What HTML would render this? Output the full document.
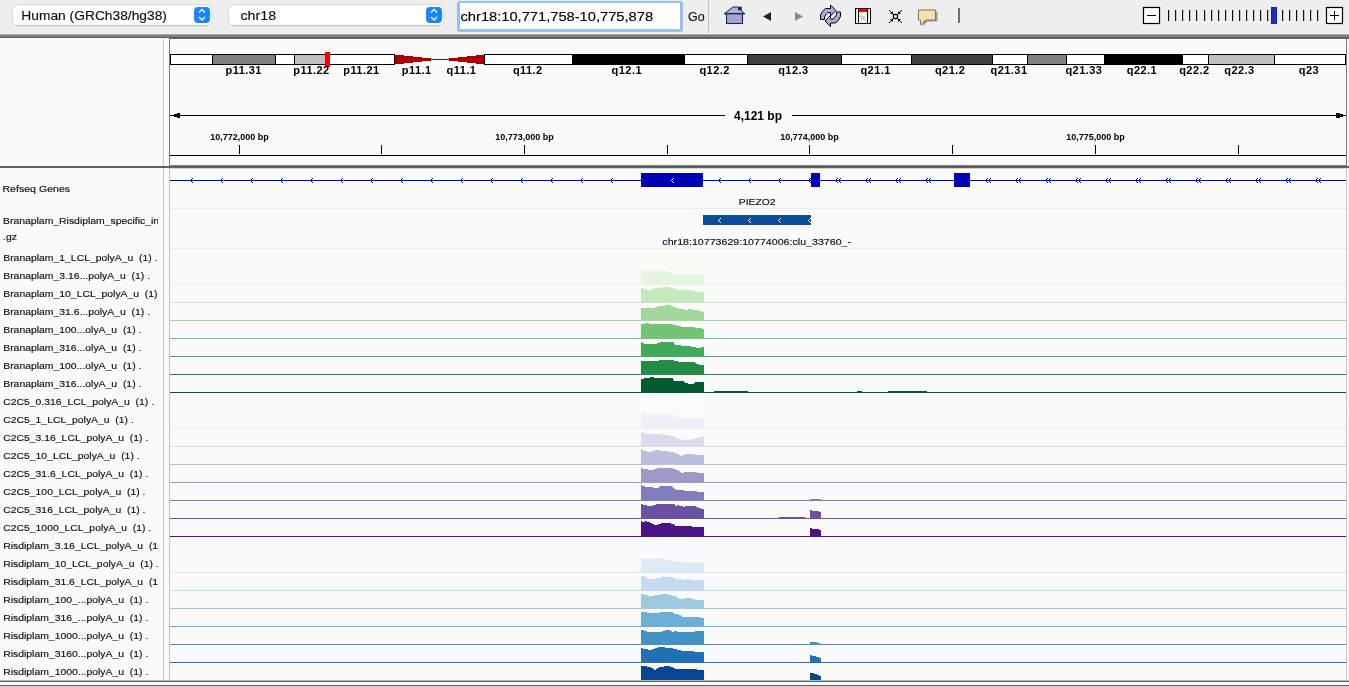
<!DOCTYPE html>
<html><head><meta charset="utf-8"><title>IGV</title>
<style>html,body{margin:0;padding:0;width:1349px;height:687px;overflow:hidden;background:#eeeeee;}
svg{display:block;font-family:"Liberation Sans",sans-serif;} text{white-space:pre;} body{-webkit-font-smoothing:antialiased;} svg{will-change:transform;}</style></head>
<body><svg width="1349" height="687" viewBox="0 0 1349 687" font-family="Liberation Sans, sans-serif" xml:space="preserve">
<defs><clipPath id="nameclip"><rect x="0" y="160" width="158" height="530"/></clipPath></defs>
<rect x="0" y="0" width="1349" height="35" fill="#eeeeee" />
<rect x="12.5" y="4.8" width="199.5" height="20.6" rx="5" fill="#ffffff" stroke="#d6d6d6" stroke-width="1"/>
<line x1="16" y1="25.8" x2="208" y2="25.8" stroke="#b8b8b8" stroke-width="0.8"/>
<rect x="194" y="7" width="16" height="16" rx="4" fill="#1a86ff"/>
<polyline points="199,12.5 202,9.5 205,12.5" fill="none" stroke="#fff" stroke-width="1.3"/>
<polyline points="199,17 202,20 205,17" fill="none" stroke="#fff" stroke-width="1.3"/>
<text transform="translate(21.3,20) scale(1.03,1)" font-size="13.4" font-weight="400" fill="#111" text-anchor="start" stroke="#111" stroke-width="0.15" >Human (GRCh38/hg38)</text>
<rect x="228.5" y="4.8" width="215.5" height="20.6" rx="5" fill="#ffffff" stroke="#d6d6d6" stroke-width="1"/>
<line x1="232" y1="25.8" x2="440" y2="25.8" stroke="#b8b8b8" stroke-width="0.8"/>
<rect x="426" y="7" width="16" height="16" rx="4" fill="#1a86ff"/>
<polyline points="431,12.5 434,9.5 437,12.5" fill="none" stroke="#fff" stroke-width="1.3"/>
<polyline points="431,17 434,20 437,17" fill="none" stroke="#fff" stroke-width="1.3"/>
<text transform="translate(240.4,20) scale(1.067,1)" font-size="13.4" font-weight="400" fill="#111" text-anchor="start" stroke="#111" stroke-width="0.15" >chr18</text>
<rect x="457" y="1" width="226" height="31" rx="3" fill="#94c0f2"/>
<rect x="460" y="3" width="220" height="26" fill="#ffffff" />
<text transform="translate(460.5,21) scale(1.096,1)" font-size="13.4" font-weight="400" fill="#000" text-anchor="start" stroke="#000" stroke-width="0.15" >chr18:10,771,758-10,775,878</text>
<text transform="translate(688,21) scale(0.93,1)" font-size="13.4" font-weight="400" fill="#111" text-anchor="start" stroke="#111" stroke-width="0.15" >Go</text>
<rect x="708" y="0" width="1" height="35" fill="#c4c4c4" />
<g>
<polygon points="724.5,13.5 733,7 737.5,7 744.5,13.5" fill="#b2b2d8" stroke="#22225a" stroke-width="1"/>
<rect x="738" y="6.7" width="3.8" height="3.5" fill="#22225a"/>
<rect x="726.5" y="13.5" width="16" height="10" fill="#a4a4cc" stroke="#22225a" stroke-width="1.1"/>
<rect x="724" y="13" width="21" height="1.3" fill="#22225a"/>
</g>
<polygon points="763,16.5 771,12 771,21" fill="#222"/>
<polygon points="803,16.5 795,12 795,21" fill="#8a8a8a"/>
<g stroke="#000" stroke-width="1" fill="#a9a9d9" stroke-linejoin="miter">
<polygon points="820.5,19.5 820.5,15 822.5,11.5 825.5,8.5 830.5,8.5 830.5,5 836,10.5 830.5,16 830.5,12.5 828,12.5 826,14.5 824.5,17 824.5,19.5"/>
<polygon points="840.5,12 840.5,16.5 838.5,20 835.5,23 830.5,23 830.5,26.5 825,21 830.5,15.5 830.5,19 833,19 835,17 836.5,14.5 836.5,12"/>
</g>
<g shape-rendering="crispEdges">
<rect x="855.5" y="8.5" width="15" height="15" fill="#fff" stroke="#000" stroke-width="1.2"/>
<rect x="858" y="9" width="1" height="14" fill="#000"/>
<rect x="867" y="9" width="1" height="14" fill="#000"/>
<rect x="859" y="9" width="8" height="3" fill="#ff0000"/>
<rect x="860" y="12" width="3" height="2" fill="#c8d4f8"/>
<rect x="865" y="13" width="1" height="1" fill="#f4c0b8"/>
<rect x="859" y="15" width="2" height="2" fill="#f4bcb4"/>
<rect x="861" y="14" width="1" height="2" fill="#f0c4c0"/>
<rect x="861" y="16" width="4" height="4" fill="#c4ccf4"/>
<rect x="865" y="19" width="1" height="2" fill="#f4c4bc"/>
<rect x="860" y="20" width="2" height="2" fill="#dfe4fa"/>
<rect x="856" y="12" width="1" height="2" fill="#f0c0c0"/>
<rect x="856" y="9" width="1" height="3" fill="#d0d8f8"/>
<rect x="856" y="15" width="1" height="6" fill="#d8def8"/>
<rect x="868" y="10" width="1" height="3" fill="#f0c8c8"/>
<rect x="868" y="14" width="1" height="7" fill="#d8dcf6"/>
</g>
<g stroke="#000" stroke-width="1" fill="none">
<rect x="893.5" y="14.5" width="4" height="4" stroke-width="1.3"/>
<line x1="889" y1="10" x2="892.5" y2="13.5"/><line x1="902" y1="10" x2="898.5" y2="13.5"/>
<line x1="889" y1="23" x2="892.5" y2="19.5"/><line x1="902" y1="23" x2="898.5" y2="19.5"/>
<polyline points="890.5,13.5 892.5,13.5 892.5,11.5"/><polyline points="900.5,13.5 898.5,13.5 898.5,11.5"/>
<polyline points="890.5,19.5 892.5,19.5 892.5,21.5"/><polyline points="900.5,19.5 898.5,19.5 898.5,21.5"/>
</g>
<path d="M919.5,10.5 L936.5,10.5 L936.5,20.5 L926.5,20.5 L921.5,25.5 L921.5,20.5 L919.5,20.5 Z" fill="#9a9a9a" transform="translate(1,1)"/>
<path d="M918.5,10 L935.5,10 L935.5,20 L925.5,20 L920.5,25 L920.5,20 L918.5,20 Z" fill="#ede6a8" stroke="#777" stroke-width="1"/>
<rect x="958" y="8" width="2" height="15" fill="#6e6e6e" />
<rect x="1143.5" y="7.5" width="16" height="16" fill="#fff" stroke="#000" stroke-width="1.2"/>
<rect x="1147" y="15" width="9" height="1" fill="#000" />
<rect x="1168" y="10" width="1.2" height="11" fill="#111" />
<rect x="1175" y="10" width="1.2" height="11" fill="#111" />
<rect x="1182" y="10" width="1.2" height="11" fill="#111" />
<rect x="1189" y="10" width="1.2" height="11" fill="#111" />
<rect x="1196" y="10" width="1.2" height="11" fill="#111" />
<rect x="1204" y="10" width="1.2" height="11" fill="#111" />
<rect x="1211" y="10" width="1.2" height="11" fill="#111" />
<rect x="1218" y="10" width="1.2" height="11" fill="#111" />
<rect x="1225" y="10" width="1.2" height="11" fill="#111" />
<rect x="1232" y="10" width="1.2" height="11" fill="#111" />
<rect x="1239" y="10" width="1.2" height="11" fill="#111" />
<rect x="1246" y="10" width="1.2" height="11" fill="#111" />
<rect x="1253" y="10" width="1.2" height="11" fill="#111" />
<rect x="1260" y="10" width="1.2" height="11" fill="#111" />
<rect x="1267" y="10" width="1.2" height="11" fill="#111" />
<rect x="1282" y="10" width="1.2" height="11" fill="#111" />
<rect x="1289" y="10" width="1.2" height="11" fill="#111" />
<rect x="1296" y="10" width="1.2" height="11" fill="#111" />
<rect x="1303" y="10" width="1.2" height="11" fill="#111" />
<rect x="1310" y="10" width="1.2" height="11" fill="#111" />
<rect x="1317" y="10" width="1.2" height="11" fill="#111" />
<rect x="1271" y="7" width="6" height="17" fill="#1c2ec6" />
<rect x="1271.5" y="7.5" width="5" height="16" fill="none" stroke="#10208a" stroke-width="0.6"/>
<rect x="1326.5" y="7.5" width="16" height="16" fill="#fff" stroke="#000" stroke-width="1.2"/>
<rect x="1330" y="15" width="9" height="1" fill="#000" />
<rect x="1334" y="11" width="1" height="9" fill="#000" />
<rect x="0" y="33" width="1349" height="1" fill="#f1f1f1" />
<rect x="0" y="34" width="1349" height="1" fill="#aaaaaa" />
<rect x="0" y="35" width="1349" height="2" fill="#7f7f7f" />
<rect x="0" y="37" width="1349" height="1" fill="#5f5f5f" />
<rect x="0" y="38" width="1349" height="128" fill="#fafafa" />
<rect x="0" y="38" width="1349" height="1" fill="#ffffff" />
<rect x="163" y="38" width="1" height="128" fill="#c8c8c8" />
<rect x="164" y="38" width="5" height="128" fill="#fcfcfc" />
<rect x="169" y="38" width="1" height="128" fill="#7a7a7a" />
<rect x="1346" y="38" width="1" height="127" fill="#7a7a7a" />
<rect x="1347" y="38" width="2" height="127" fill="#f8f8f8" />
<rect x="169" y="38" width="1180" height="1" fill="#646464" />
<rect x="170" y="39" width="1176" height="1" fill="#ffffff" />
<g shape-rendering="crispEdges">
<rect x="170" y="54" width="42" height="11" fill="#ffffff" />
<rect x="212" y="54" width="63" height="11" fill="#7f7f7f" />
<rect x="275" y="54" width="19" height="11" fill="#ffffff" />
<rect x="294" y="54" width="31" height="11" fill="#bfbfbf" />
<rect x="325" y="54" width="70" height="11" fill="#ffffff" />
<rect x="484" y="54" width="88" height="11" fill="#ffffff" />
<rect x="572" y="54" width="112" height="11" fill="#000000" />
<rect x="684" y="54" width="63" height="11" fill="#ffffff" />
<rect x="747" y="54" width="94" height="11" fill="#3f3f3f" />
<rect x="841" y="54" width="70" height="11" fill="#ffffff" />
<rect x="911" y="54" width="81" height="11" fill="#3f3f3f" />
<rect x="992" y="54" width="35" height="11" fill="#ffffff" />
<rect x="1027" y="54" width="39" height="11" fill="#7f7f7f" />
<rect x="1066" y="54" width="38" height="11" fill="#ffffff" />
<rect x="1104" y="54" width="78" height="11" fill="#000000" />
<rect x="1182" y="54" width="26" height="11" fill="#ffffff" />
<rect x="1208" y="54" width="66" height="11" fill="#bfbfbf" />
<rect x="1274" y="54" width="72" height="11" fill="#ffffff" />
<rect x="170" y="54" width="225" height="1" fill="#000" />
<rect x="170" y="64" width="225" height="1" fill="#000" />
<rect x="484" y="54" width="862" height="1" fill="#000" />
<rect x="484" y="64" width="862" height="1" fill="#000" />
<rect x="170" y="54" width="1" height="11" fill="#000" />
<rect x="1345" y="54" width="1" height="11" fill="#000" />
<rect x="212" y="54" width="1" height="11" fill="#000" />
<rect x="275" y="54" width="1" height="11" fill="#000" />
<rect x="294" y="54" width="1" height="11" fill="#000" />
<rect x="325" y="54" width="1" height="11" fill="#000" />
<rect x="572" y="54" width="1" height="11" fill="#000" />
<rect x="684" y="54" width="1" height="11" fill="#000" />
<rect x="747" y="54" width="1" height="11" fill="#000" />
<rect x="841" y="54" width="1" height="11" fill="#000" />
<rect x="911" y="54" width="1" height="11" fill="#000" />
<rect x="992" y="54" width="1" height="11" fill="#000" />
<rect x="1027" y="54" width="1" height="11" fill="#000" />
<rect x="1066" y="54" width="1" height="11" fill="#000" />
<rect x="1104" y="54" width="1" height="11" fill="#000" />
<rect x="1182" y="54" width="1" height="11" fill="#000" />
<rect x="1208" y="54" width="1" height="11" fill="#000" />
<rect x="1274" y="54" width="1" height="11" fill="#000" />
<rect x="394" y="54" width="1" height="11" fill="#000" />
<rect x="484" y="54" width="1" height="11" fill="#000" />
<rect x="395" y="55" width="9" height="9" fill="#aa0000" />
<rect x="404" y="56" width="9" height="7" fill="#aa0000" />
<rect x="413" y="57" width="9" height="5" fill="#aa0000" />
<rect x="422" y="58" width="9" height="3" fill="#aa0000" />
<rect x="431" y="59" width="18" height="1" fill="#aa0000" />
<rect x="476" y="55" width="8" height="9" fill="#aa0000" />
<rect x="467" y="56" width="9" height="7" fill="#aa0000" />
<rect x="458" y="57" width="9" height="5" fill="#aa0000" />
<rect x="449" y="58" width="9" height="3" fill="#aa0000" />
<rect x="325" y="52" width="5" height="15" fill="#ff0000" />
</g>
<text x="243.7" y="74" font-size="11" font-weight="700" fill="#000" text-anchor="middle" letter-spacing="0.45" >p11.31</text>
<text x="311.5" y="74" font-size="11" font-weight="700" fill="#000" text-anchor="middle" letter-spacing="0.45" >p11.22</text>
<text x="361.4" y="74" font-size="11" font-weight="700" fill="#000" text-anchor="middle" letter-spacing="0.45" >p11.21</text>
<text x="416.7" y="74" font-size="11" font-weight="700" fill="#000" text-anchor="middle" letter-spacing="0.45" >p11.1</text>
<text x="461.4" y="74" font-size="11" font-weight="700" fill="#000" text-anchor="middle" letter-spacing="0.45" >q11.1</text>
<text x="527.8" y="74" font-size="11" font-weight="700" fill="#000" text-anchor="middle" letter-spacing="0.45" >q11.2</text>
<text x="626.8" y="74" font-size="11" font-weight="700" fill="#000" text-anchor="middle" letter-spacing="0.45" >q12.1</text>
<text x="714.6" y="74" font-size="11" font-weight="700" fill="#000" text-anchor="middle" letter-spacing="0.45" >q12.2</text>
<text x="793.4" y="74" font-size="11" font-weight="700" fill="#000" text-anchor="middle" letter-spacing="0.45" >q12.3</text>
<text x="875.6" y="74" font-size="11" font-weight="700" fill="#000" text-anchor="middle" letter-spacing="0.45" >q21.1</text>
<text x="950.1" y="74" font-size="11" font-weight="700" fill="#000" text-anchor="middle" letter-spacing="0.45" >q21.2</text>
<text x="1009" y="74" font-size="11" font-weight="700" fill="#000" text-anchor="middle" letter-spacing="0.45" >q21.31</text>
<text x="1083.9" y="74" font-size="11" font-weight="700" fill="#000" text-anchor="middle" letter-spacing="0.45" >q21.33</text>
<text x="1142" y="74" font-size="11" font-weight="700" fill="#000" text-anchor="middle" letter-spacing="0.45" >q22.1</text>
<text x="1194.4" y="74" font-size="11" font-weight="700" fill="#000" text-anchor="middle" letter-spacing="0.45" >q22.2</text>
<text x="1239.5" y="74" font-size="11" font-weight="700" fill="#000" text-anchor="middle" letter-spacing="0.45" >q22.3</text>
<text x="1309" y="74" font-size="11" font-weight="700" fill="#000" text-anchor="middle" letter-spacing="0.45" >q23</text>
<rect x="170" y="115" width="555" height="1" fill="#000" />
<rect x="792" y="115" width="554" height="1" fill="#000" />
<rect x="174" y="114" width="3" height="3" fill="#000" />
<rect x="177" y="113" width="3" height="5" fill="#000" />
<rect x="1336" y="113" width="4" height="5" fill="#000" />
<rect x="1340" y="114" width="3" height="3" fill="#000" />
<text x="758" y="120" font-size="12" font-weight="700" fill="#000" text-anchor="middle" >4,121 bp</text>
<rect x="239" y="145" width="1" height="9" fill="#000" />
<text x="239.5" y="140" font-size="9" font-weight="700" fill="#000" text-anchor="middle" >10,772,000 bp</text>
<rect x="381" y="145" width="1" height="9" fill="#000" />
<rect x="524" y="145" width="1" height="9" fill="#000" />
<text x="524.5" y="140" font-size="9" font-weight="700" fill="#000" text-anchor="middle" >10,773,000 bp</text>
<rect x="667" y="145" width="1" height="9" fill="#000" />
<rect x="809" y="145" width="1" height="9" fill="#000" />
<text x="809.5" y="140" font-size="9" font-weight="700" fill="#000" text-anchor="middle" >10,774,000 bp</text>
<rect x="952" y="145" width="1" height="9" fill="#000" />
<rect x="1095" y="145" width="1" height="9" fill="#000" />
<text x="1095.5" y="140" font-size="9" font-weight="700" fill="#000" text-anchor="middle" >10,775,000 bp</text>
<rect x="1238" y="145" width="1" height="9" fill="#000" />
<rect x="170" y="155" width="1176" height="1" fill="#000" />
<rect x="0" y="166" width="170" height="2" fill="#606060" />
<rect x="170" y="165" width="1177" height="1" fill="#7c7c7c" />
<rect x="170" y="166" width="1177" height="2" fill="#606060" />
<rect x="1347" y="166" width="2" height="2" fill="#6a6a6a" />
<rect x="0" y="168" width="1349" height="513" fill="#fafafa" />
<rect x="170" y="168" width="1176" height="1" fill="#d0d0d0" />
<rect x="170" y="169" width="1176" height="1" fill="#fdfdfd" />
<rect x="163" y="168" width="1" height="513" fill="#c6c6c6" />
<rect x="164" y="168" width="5" height="513" fill="#fbfbfb" />
<rect x="169" y="168" width="1" height="513" fill="#c6c6c6" />
<rect x="1346" y="168" width="1" height="513" fill="#c6c6c6" />
<rect x="1347" y="168" width="2" height="513" fill="#f8f8f8" />
<rect x="170" y="208" width="1176" height="1" fill="#ececec" />
<rect x="170" y="248" width="1176" height="1" fill="#ececec" />
<g shape-rendering="crispEdges">
<rect x="170" y="180" width="1176" height="1" fill="#0000b4" />
<rect x="191" y="179" width="1" height="3" fill="#0000b4" />
<rect x="192" y="178" width="1" height="1" fill="#0000b4" />
<rect x="192" y="182" width="1" height="1" fill="#0000b4" />
<rect x="221" y="179" width="1" height="3" fill="#0000b4" />
<rect x="222" y="178" width="1" height="1" fill="#0000b4" />
<rect x="222" y="182" width="1" height="1" fill="#0000b4" />
<rect x="251" y="179" width="1" height="3" fill="#0000b4" />
<rect x="252" y="178" width="1" height="1" fill="#0000b4" />
<rect x="252" y="182" width="1" height="1" fill="#0000b4" />
<rect x="281" y="179" width="1" height="3" fill="#0000b4" />
<rect x="282" y="178" width="1" height="1" fill="#0000b4" />
<rect x="282" y="182" width="1" height="1" fill="#0000b4" />
<rect x="311" y="179" width="1" height="3" fill="#0000b4" />
<rect x="312" y="178" width="1" height="1" fill="#0000b4" />
<rect x="312" y="182" width="1" height="1" fill="#0000b4" />
<rect x="341" y="179" width="1" height="3" fill="#0000b4" />
<rect x="342" y="178" width="1" height="1" fill="#0000b4" />
<rect x="342" y="182" width="1" height="1" fill="#0000b4" />
<rect x="371" y="179" width="1" height="3" fill="#0000b4" />
<rect x="372" y="178" width="1" height="1" fill="#0000b4" />
<rect x="372" y="182" width="1" height="1" fill="#0000b4" />
<rect x="401" y="179" width="1" height="3" fill="#0000b4" />
<rect x="402" y="178" width="1" height="1" fill="#0000b4" />
<rect x="402" y="182" width="1" height="1" fill="#0000b4" />
<rect x="431" y="179" width="1" height="3" fill="#0000b4" />
<rect x="432" y="178" width="1" height="1" fill="#0000b4" />
<rect x="432" y="182" width="1" height="1" fill="#0000b4" />
<rect x="461" y="179" width="1" height="3" fill="#0000b4" />
<rect x="462" y="178" width="1" height="1" fill="#0000b4" />
<rect x="462" y="182" width="1" height="1" fill="#0000b4" />
<rect x="491" y="179" width="1" height="3" fill="#0000b4" />
<rect x="492" y="178" width="1" height="1" fill="#0000b4" />
<rect x="492" y="182" width="1" height="1" fill="#0000b4" />
<rect x="521" y="179" width="1" height="3" fill="#0000b4" />
<rect x="522" y="178" width="1" height="1" fill="#0000b4" />
<rect x="522" y="182" width="1" height="1" fill="#0000b4" />
<rect x="551" y="179" width="1" height="3" fill="#0000b4" />
<rect x="552" y="178" width="1" height="1" fill="#0000b4" />
<rect x="552" y="182" width="1" height="1" fill="#0000b4" />
<rect x="581" y="179" width="1" height="3" fill="#0000b4" />
<rect x="582" y="178" width="1" height="1" fill="#0000b4" />
<rect x="582" y="182" width="1" height="1" fill="#0000b4" />
<rect x="611" y="179" width="1" height="3" fill="#0000b4" />
<rect x="612" y="178" width="1" height="1" fill="#0000b4" />
<rect x="612" y="182" width="1" height="1" fill="#0000b4" />
<rect x="719" y="179" width="1" height="3" fill="#0000b4" />
<rect x="720" y="178" width="1" height="1" fill="#0000b4" />
<rect x="720" y="182" width="1" height="1" fill="#0000b4" />
<rect x="749" y="179" width="1" height="3" fill="#0000b4" />
<rect x="750" y="178" width="1" height="1" fill="#0000b4" />
<rect x="750" y="182" width="1" height="1" fill="#0000b4" />
<rect x="779" y="179" width="1" height="3" fill="#0000b4" />
<rect x="780" y="178" width="1" height="1" fill="#0000b4" />
<rect x="780" y="182" width="1" height="1" fill="#0000b4" />
<rect x="809" y="179" width="1" height="3" fill="#0000b4" />
<rect x="810" y="178" width="1" height="1" fill="#0000b4" />
<rect x="810" y="182" width="1" height="1" fill="#0000b4" />
<rect x="836" y="179" width="1" height="3" fill="#0000b4" />
<rect x="837" y="178" width="1" height="1" fill="#0000b4" />
<rect x="837" y="182" width="1" height="1" fill="#0000b4" />
<rect x="839" y="179" width="1" height="3" fill="#0000b4" />
<rect x="840" y="178" width="1" height="1" fill="#0000b4" />
<rect x="840" y="182" width="1" height="1" fill="#0000b4" />
<rect x="866" y="179" width="1" height="3" fill="#0000b4" />
<rect x="867" y="178" width="1" height="1" fill="#0000b4" />
<rect x="867" y="182" width="1" height="1" fill="#0000b4" />
<rect x="869" y="179" width="1" height="3" fill="#0000b4" />
<rect x="870" y="178" width="1" height="1" fill="#0000b4" />
<rect x="870" y="182" width="1" height="1" fill="#0000b4" />
<rect x="896" y="179" width="1" height="3" fill="#0000b4" />
<rect x="897" y="178" width="1" height="1" fill="#0000b4" />
<rect x="897" y="182" width="1" height="1" fill="#0000b4" />
<rect x="899" y="179" width="1" height="3" fill="#0000b4" />
<rect x="900" y="178" width="1" height="1" fill="#0000b4" />
<rect x="900" y="182" width="1" height="1" fill="#0000b4" />
<rect x="926" y="179" width="1" height="3" fill="#0000b4" />
<rect x="927" y="178" width="1" height="1" fill="#0000b4" />
<rect x="927" y="182" width="1" height="1" fill="#0000b4" />
<rect x="929" y="179" width="1" height="3" fill="#0000b4" />
<rect x="930" y="178" width="1" height="1" fill="#0000b4" />
<rect x="930" y="182" width="1" height="1" fill="#0000b4" />
<rect x="986" y="179" width="1" height="3" fill="#0000b4" />
<rect x="987" y="178" width="1" height="1" fill="#0000b4" />
<rect x="987" y="182" width="1" height="1" fill="#0000b4" />
<rect x="989" y="179" width="1" height="3" fill="#0000b4" />
<rect x="990" y="178" width="1" height="1" fill="#0000b4" />
<rect x="990" y="182" width="1" height="1" fill="#0000b4" />
<rect x="1016" y="179" width="1" height="3" fill="#0000b4" />
<rect x="1017" y="178" width="1" height="1" fill="#0000b4" />
<rect x="1017" y="182" width="1" height="1" fill="#0000b4" />
<rect x="1019" y="179" width="1" height="3" fill="#0000b4" />
<rect x="1020" y="178" width="1" height="1" fill="#0000b4" />
<rect x="1020" y="182" width="1" height="1" fill="#0000b4" />
<rect x="1046" y="179" width="1" height="3" fill="#0000b4" />
<rect x="1047" y="178" width="1" height="1" fill="#0000b4" />
<rect x="1047" y="182" width="1" height="1" fill="#0000b4" />
<rect x="1049" y="179" width="1" height="3" fill="#0000b4" />
<rect x="1050" y="178" width="1" height="1" fill="#0000b4" />
<rect x="1050" y="182" width="1" height="1" fill="#0000b4" />
<rect x="1076" y="179" width="1" height="3" fill="#0000b4" />
<rect x="1077" y="178" width="1" height="1" fill="#0000b4" />
<rect x="1077" y="182" width="1" height="1" fill="#0000b4" />
<rect x="1079" y="179" width="1" height="3" fill="#0000b4" />
<rect x="1080" y="178" width="1" height="1" fill="#0000b4" />
<rect x="1080" y="182" width="1" height="1" fill="#0000b4" />
<rect x="1106" y="179" width="1" height="3" fill="#0000b4" />
<rect x="1107" y="178" width="1" height="1" fill="#0000b4" />
<rect x="1107" y="182" width="1" height="1" fill="#0000b4" />
<rect x="1109" y="179" width="1" height="3" fill="#0000b4" />
<rect x="1110" y="178" width="1" height="1" fill="#0000b4" />
<rect x="1110" y="182" width="1" height="1" fill="#0000b4" />
<rect x="1136" y="179" width="1" height="3" fill="#0000b4" />
<rect x="1137" y="178" width="1" height="1" fill="#0000b4" />
<rect x="1137" y="182" width="1" height="1" fill="#0000b4" />
<rect x="1139" y="179" width="1" height="3" fill="#0000b4" />
<rect x="1140" y="178" width="1" height="1" fill="#0000b4" />
<rect x="1140" y="182" width="1" height="1" fill="#0000b4" />
<rect x="1166" y="179" width="1" height="3" fill="#0000b4" />
<rect x="1167" y="178" width="1" height="1" fill="#0000b4" />
<rect x="1167" y="182" width="1" height="1" fill="#0000b4" />
<rect x="1169" y="179" width="1" height="3" fill="#0000b4" />
<rect x="1170" y="178" width="1" height="1" fill="#0000b4" />
<rect x="1170" y="182" width="1" height="1" fill="#0000b4" />
<rect x="1196" y="179" width="1" height="3" fill="#0000b4" />
<rect x="1197" y="178" width="1" height="1" fill="#0000b4" />
<rect x="1197" y="182" width="1" height="1" fill="#0000b4" />
<rect x="1199" y="179" width="1" height="3" fill="#0000b4" />
<rect x="1200" y="178" width="1" height="1" fill="#0000b4" />
<rect x="1200" y="182" width="1" height="1" fill="#0000b4" />
<rect x="1226" y="179" width="1" height="3" fill="#0000b4" />
<rect x="1227" y="178" width="1" height="1" fill="#0000b4" />
<rect x="1227" y="182" width="1" height="1" fill="#0000b4" />
<rect x="1229" y="179" width="1" height="3" fill="#0000b4" />
<rect x="1230" y="178" width="1" height="1" fill="#0000b4" />
<rect x="1230" y="182" width="1" height="1" fill="#0000b4" />
<rect x="1256" y="179" width="1" height="3" fill="#0000b4" />
<rect x="1257" y="178" width="1" height="1" fill="#0000b4" />
<rect x="1257" y="182" width="1" height="1" fill="#0000b4" />
<rect x="1259" y="179" width="1" height="3" fill="#0000b4" />
<rect x="1260" y="178" width="1" height="1" fill="#0000b4" />
<rect x="1260" y="182" width="1" height="1" fill="#0000b4" />
<rect x="1286" y="179" width="1" height="3" fill="#0000b4" />
<rect x="1287" y="178" width="1" height="1" fill="#0000b4" />
<rect x="1287" y="182" width="1" height="1" fill="#0000b4" />
<rect x="1289" y="179" width="1" height="3" fill="#0000b4" />
<rect x="1290" y="178" width="1" height="1" fill="#0000b4" />
<rect x="1290" y="182" width="1" height="1" fill="#0000b4" />
<rect x="1316" y="179" width="1" height="3" fill="#0000b4" />
<rect x="1317" y="178" width="1" height="1" fill="#0000b4" />
<rect x="1317" y="182" width="1" height="1" fill="#0000b4" />
<rect x="1319" y="179" width="1" height="3" fill="#0000b4" />
<rect x="1320" y="178" width="1" height="1" fill="#0000b4" />
<rect x="1320" y="182" width="1" height="1" fill="#0000b4" />
<rect x="641" y="173" width="62" height="14" fill="#0000b4" />
<rect x="811" y="173" width="9" height="14" fill="#0000b4" />
<rect x="954" y="173" width="16" height="14" fill="#0000b4" />
<rect x="671" y="180" width="1" height="1" fill="#ffffff" />
<rect x="672" y="179" width="1" height="1" fill="#ffffff" />
<rect x="673" y="178" width="1" height="1" fill="#ffffff" />
<rect x="672" y="181" width="1" height="1" fill="#ffffff" />
<rect x="673" y="182" width="1" height="1" fill="#ffffff" />
<rect x="703" y="215" width="108" height="10" fill="#0b4c9c" />
<rect x="718" y="220" width="1" height="1" fill="#ffffff" />
<rect x="719" y="219" width="1" height="1" fill="#ffffff" />
<rect x="720" y="218" width="1" height="1" fill="#ffffff" />
<rect x="719" y="221" width="1" height="1" fill="#ffffff" />
<rect x="720" y="222" width="1" height="1" fill="#ffffff" />
<rect x="748" y="220" width="1" height="1" fill="#ffffff" />
<rect x="749" y="219" width="1" height="1" fill="#ffffff" />
<rect x="750" y="218" width="1" height="1" fill="#ffffff" />
<rect x="749" y="221" width="1" height="1" fill="#ffffff" />
<rect x="750" y="222" width="1" height="1" fill="#ffffff" />
<rect x="778" y="220" width="1" height="1" fill="#ffffff" />
<rect x="779" y="219" width="1" height="1" fill="#ffffff" />
<rect x="780" y="218" width="1" height="1" fill="#ffffff" />
<rect x="779" y="221" width="1" height="1" fill="#ffffff" />
<rect x="780" y="222" width="1" height="1" fill="#ffffff" />
<rect x="808" y="220" width="1" height="1" fill="#ffffff" />
<rect x="809" y="219" width="1" height="1" fill="#ffffff" />
<rect x="810" y="218" width="1" height="1" fill="#ffffff" />
<rect x="809" y="221" width="1" height="1" fill="#ffffff" />
<rect x="810" y="222" width="1" height="1" fill="#ffffff" />
</g>
<text transform="translate(757.2,205) scale(1.08,1)" font-size="9.6" font-weight="400" fill="#111" text-anchor="middle" stroke="#111" stroke-width="0.15" >PIEZO2</text>
<text transform="translate(756.7,244.5) scale(1.11,1)" font-size="9.6" font-weight="400" fill="#111" text-anchor="middle" stroke="#111" stroke-width="0.15" >chr18:10773629:10774006:clu_33760_-</text>
<g clip-path="url(#nameclip)">
<text transform="translate(2.4,192) scale(1.14,1)" font-size="9.3" font-weight="400" fill="#111" text-anchor="start" stroke="#111" stroke-width="0.15" >Refseq Genes</text>
<text transform="translate(3,224) scale(1.12,1)" font-size="9.3" font-weight="400" fill="#111" text-anchor="start" stroke="#111" stroke-width="0.15" >Branaplam_Risdiplam_specific_int</text>
<text transform="translate(3,240) scale(1.12,1)" font-size="9.3" font-weight="400" fill="#111" text-anchor="start" stroke="#111" stroke-width="0.15" >.gz</text>
</g>
<g shape-rendering="crispEdges">
<rect x="170" y="266" width="1176" height="1" fill="#f7fcf5" />
<path d="M641,255h1v11h-1zM642,255h1v11h-1zM643,255h1v11h-1zM644,254h1v12h-1zM645,254h1v12h-1zM646,254h1v12h-1zM647,254h1v12h-1zM648,254h1v12h-1zM649,253h1v13h-1zM650,253h1v13h-1zM651,253h1v13h-1zM652,253h1v13h-1zM653,253h1v13h-1zM654,252h1v14h-1zM655,252h1v14h-1zM656,252h1v14h-1zM657,252h1v14h-1zM658,252h1v14h-1zM659,252h1v14h-1zM660,252h1v14h-1zM661,252h1v14h-1zM662,252h1v14h-1zM663,252h1v14h-1zM664,252h1v14h-1zM665,252h1v14h-1zM666,252h1v14h-1zM667,252h1v14h-1zM668,252h1v14h-1zM669,252h1v14h-1zM670,252h1v14h-1zM671,252h1v14h-1zM672,252h1v14h-1zM673,252h1v14h-1zM674,252h1v14h-1zM675,252h1v14h-1zM676,252h1v14h-1zM677,252h1v14h-1zM678,253h1v13h-1zM679,253h1v13h-1zM680,253h1v13h-1zM681,253h1v13h-1zM682,253h1v13h-1zM683,253h1v13h-1zM684,253h1v13h-1zM685,253h1v13h-1zM686,254h1v12h-1zM687,254h1v12h-1zM688,254h1v12h-1zM689,254h1v12h-1zM690,254h1v12h-1zM691,254h1v12h-1zM692,254h1v12h-1zM693,254h1v12h-1zM694,254h1v12h-1zM695,254h1v12h-1zM696,254h1v12h-1zM697,254h1v12h-1zM698,254h1v12h-1zM699,254h1v12h-1zM700,254h1v12h-1zM701,254h1v12h-1zM702,254h1v12h-1zM703,254h1v12h-1z" fill="#f7fcf5"/>
<rect x="170" y="284" width="1176" height="1" fill="#e5f5e0" />
<path d="M641,269h1v15h-1zM642,270h1v14h-1zM643,270h1v14h-1zM644,271h1v13h-1zM645,271h1v13h-1zM646,271h1v13h-1zM647,271h1v13h-1zM648,271h1v13h-1zM649,271h1v13h-1zM650,271h1v13h-1zM651,271h1v13h-1zM652,270h1v14h-1zM653,270h1v14h-1zM654,270h1v14h-1zM655,270h1v14h-1zM656,270h1v14h-1zM657,270h1v14h-1zM658,270h1v14h-1zM659,270h1v14h-1zM660,270h1v14h-1zM661,271h1v13h-1zM662,271h1v13h-1zM663,271h1v13h-1zM664,271h1v13h-1zM665,271h1v13h-1zM666,271h1v13h-1zM667,272h1v12h-1zM668,272h1v12h-1zM669,272h1v12h-1zM670,272h1v12h-1zM671,272h1v12h-1zM672,272h1v12h-1zM673,273h1v11h-1zM674,274h1v10h-1zM675,274h1v10h-1zM676,274h1v10h-1zM677,274h1v10h-1zM678,274h1v10h-1zM679,274h1v10h-1zM680,274h1v10h-1zM681,274h1v10h-1zM682,274h1v10h-1zM683,274h1v10h-1zM684,274h1v10h-1zM685,274h1v10h-1zM686,274h1v10h-1zM687,274h1v10h-1zM688,274h1v10h-1zM689,274h1v10h-1zM690,274h1v10h-1zM691,274h1v10h-1zM692,274h1v10h-1zM693,274h1v10h-1zM694,274h1v10h-1zM695,274h1v10h-1zM696,274h1v10h-1zM697,274h1v10h-1zM698,274h1v10h-1zM699,274h1v10h-1zM700,274h1v10h-1zM701,274h1v10h-1zM702,274h1v10h-1zM703,274h1v10h-1z" fill="#e5f5e0"/>
<rect x="170" y="302" width="1176" height="1" fill="#c7e9c0" />
<path d="M641,288h1v14h-1zM642,288h1v14h-1zM643,289h1v13h-1zM644,289h1v13h-1zM645,289h1v13h-1zM646,289h1v13h-1zM647,290h1v12h-1zM648,290h1v12h-1zM649,290h1v12h-1zM650,290h1v12h-1zM651,290h1v12h-1zM652,289h1v13h-1zM653,289h1v13h-1zM654,288h1v14h-1zM655,288h1v14h-1zM656,288h1v14h-1zM657,288h1v14h-1zM658,288h1v14h-1zM659,288h1v14h-1zM660,288h1v14h-1zM661,288h1v14h-1zM662,287h1v15h-1zM663,287h1v15h-1zM664,287h1v15h-1zM665,287h1v15h-1zM666,287h1v15h-1zM667,287h1v15h-1zM668,287h1v15h-1zM669,287h1v15h-1zM670,288h1v14h-1zM671,288h1v14h-1zM672,288h1v14h-1zM673,288h1v14h-1zM674,289h1v13h-1zM675,289h1v13h-1zM676,289h1v13h-1zM677,290h1v12h-1zM678,290h1v12h-1zM679,290h1v12h-1zM680,290h1v12h-1zM681,290h1v12h-1zM682,290h1v12h-1zM683,290h1v12h-1zM684,290h1v12h-1zM685,290h1v12h-1zM686,290h1v12h-1zM687,290h1v12h-1zM688,290h1v12h-1zM689,290h1v12h-1zM690,290h1v12h-1zM691,290h1v12h-1zM692,291h1v11h-1zM693,291h1v11h-1zM694,291h1v11h-1zM695,291h1v11h-1zM696,291h1v11h-1zM697,291h1v11h-1zM698,292h1v10h-1zM699,292h1v10h-1zM700,292h1v10h-1zM701,292h1v10h-1zM702,292h1v10h-1zM703,292h1v10h-1z" fill="#c7e9c0"/>
<rect x="170" y="320" width="1176" height="1" fill="#a1d99b" />
<path d="M641,308h1v12h-1zM642,308h1v12h-1zM643,308h1v12h-1zM644,308h1v12h-1zM645,308h1v12h-1zM646,308h1v12h-1zM647,308h1v12h-1zM648,308h1v12h-1zM649,308h1v12h-1zM650,308h1v12h-1zM651,308h1v12h-1zM652,308h1v12h-1zM653,308h1v12h-1zM654,308h1v12h-1zM655,307h1v13h-1zM656,307h1v13h-1zM657,307h1v13h-1zM658,306h1v14h-1zM659,306h1v14h-1zM660,306h1v14h-1zM661,306h1v14h-1zM662,306h1v14h-1zM663,306h1v14h-1zM664,306h1v14h-1zM665,305h1v15h-1zM666,305h1v15h-1zM667,305h1v15h-1zM668,305h1v15h-1zM669,305h1v15h-1zM670,305h1v15h-1zM671,306h1v14h-1zM672,306h1v14h-1zM673,307h1v13h-1zM674,307h1v13h-1zM675,308h1v12h-1zM676,308h1v12h-1zM677,308h1v12h-1zM678,308h1v12h-1zM679,309h1v11h-1zM680,309h1v11h-1zM681,309h1v11h-1zM682,309h1v11h-1zM683,309h1v11h-1zM684,310h1v10h-1zM685,310h1v10h-1zM686,310h1v10h-1zM687,310h1v10h-1zM688,309h1v11h-1zM689,309h1v11h-1zM690,309h1v11h-1zM691,309h1v11h-1zM692,310h1v10h-1zM693,310h1v10h-1zM694,310h1v10h-1zM695,310h1v10h-1zM696,310h1v10h-1zM697,310h1v10h-1zM698,311h1v9h-1zM699,311h1v9h-1zM700,311h1v9h-1zM701,311h1v9h-1zM702,312h1v8h-1zM703,312h1v8h-1z" fill="#a1d99b"/>
<rect x="170" y="338" width="1176" height="1" fill="#74c476" />
<path d="M641,324h1v14h-1zM642,324h1v14h-1zM643,324h1v14h-1zM644,324h1v14h-1zM645,323h1v15h-1zM646,323h1v15h-1zM647,323h1v15h-1zM648,323h1v15h-1zM649,324h1v14h-1zM650,324h1v14h-1zM651,324h1v14h-1zM652,324h1v14h-1zM653,324h1v14h-1zM654,324h1v14h-1zM655,324h1v14h-1zM656,324h1v14h-1zM657,324h1v14h-1zM658,324h1v14h-1zM659,324h1v14h-1zM660,324h1v14h-1zM661,324h1v14h-1zM662,324h1v14h-1zM663,324h1v14h-1zM664,324h1v14h-1zM665,324h1v14h-1zM666,324h1v14h-1zM667,324h1v14h-1zM668,324h1v14h-1zM669,324h1v14h-1zM670,324h1v14h-1zM671,324h1v14h-1zM672,324h1v14h-1zM673,325h1v13h-1zM674,325h1v13h-1zM675,325h1v13h-1zM676,325h1v13h-1zM677,326h1v12h-1zM678,326h1v12h-1zM679,326h1v12h-1zM680,326h1v12h-1zM681,327h1v11h-1zM682,327h1v11h-1zM683,327h1v11h-1zM684,327h1v11h-1zM685,327h1v11h-1zM686,327h1v11h-1zM687,327h1v11h-1zM688,327h1v11h-1zM689,327h1v11h-1zM690,327h1v11h-1zM691,327h1v11h-1zM692,327h1v11h-1zM693,327h1v11h-1zM694,327h1v11h-1zM695,328h1v10h-1zM696,328h1v10h-1zM697,328h1v10h-1zM698,328h1v10h-1zM699,328h1v10h-1zM700,328h1v10h-1zM701,328h1v10h-1zM702,329h1v9h-1zM703,329h1v9h-1z" fill="#74c476"/>
<rect x="170" y="356" width="1176" height="1" fill="#41ab5d" />
<path d="M641,342h1v14h-1zM642,343h1v13h-1zM643,343h1v13h-1zM644,344h1v12h-1zM645,344h1v12h-1zM646,344h1v12h-1zM647,344h1v12h-1zM648,344h1v12h-1zM649,344h1v12h-1zM650,344h1v12h-1zM651,344h1v12h-1zM652,344h1v12h-1zM653,344h1v12h-1zM654,344h1v12h-1zM655,344h1v12h-1zM656,344h1v12h-1zM657,343h1v13h-1zM658,343h1v13h-1zM659,343h1v13h-1zM660,342h1v14h-1zM661,342h1v14h-1zM662,342h1v14h-1zM663,342h1v14h-1zM664,342h1v14h-1zM665,342h1v14h-1zM666,342h1v14h-1zM667,342h1v14h-1zM668,342h1v14h-1zM669,342h1v14h-1zM670,342h1v14h-1zM671,342h1v14h-1zM672,342h1v14h-1zM673,342h1v14h-1zM674,344h1v12h-1zM675,345h1v11h-1zM676,345h1v11h-1zM677,345h1v11h-1zM678,345h1v11h-1zM679,345h1v11h-1zM680,345h1v11h-1zM681,346h1v10h-1zM682,346h1v10h-1zM683,346h1v10h-1zM684,346h1v10h-1zM685,346h1v10h-1zM686,346h1v10h-1zM687,346h1v10h-1zM688,346h1v10h-1zM689,346h1v10h-1zM690,346h1v10h-1zM691,347h1v9h-1zM692,347h1v9h-1zM693,347h1v9h-1zM694,347h1v9h-1zM695,347h1v9h-1zM696,348h1v8h-1zM697,348h1v8h-1zM698,348h1v8h-1zM699,348h1v8h-1zM700,348h1v8h-1zM701,347h1v9h-1zM702,347h1v9h-1zM703,347h1v9h-1z" fill="#41ab5d"/>
<rect x="170" y="374" width="1176" height="1" fill="#238b45" />
<path d="M641,361h1v13h-1zM642,361h1v13h-1zM643,361h1v13h-1zM644,361h1v13h-1zM645,361h1v13h-1zM646,361h1v13h-1zM647,361h1v13h-1zM648,361h1v13h-1zM649,361h1v13h-1zM650,361h1v13h-1zM651,361h1v13h-1zM652,361h1v13h-1zM653,361h1v13h-1zM654,361h1v13h-1zM655,361h1v13h-1zM656,361h1v13h-1zM657,361h1v13h-1zM658,361h1v13h-1zM659,360h1v14h-1zM660,360h1v14h-1zM661,360h1v14h-1zM662,360h1v14h-1zM663,360h1v14h-1zM664,360h1v14h-1zM665,360h1v14h-1zM666,360h1v14h-1zM667,360h1v14h-1zM668,360h1v14h-1zM669,360h1v14h-1zM670,360h1v14h-1zM671,360h1v14h-1zM672,360h1v14h-1zM673,360h1v14h-1zM674,361h1v13h-1zM675,361h1v13h-1zM676,361h1v13h-1zM677,361h1v13h-1zM678,362h1v12h-1zM679,362h1v12h-1zM680,362h1v12h-1zM681,362h1v12h-1zM682,362h1v12h-1zM683,362h1v12h-1zM684,362h1v12h-1zM685,362h1v12h-1zM686,362h1v12h-1zM687,362h1v12h-1zM688,362h1v12h-1zM689,362h1v12h-1zM690,362h1v12h-1zM691,362h1v12h-1zM692,362h1v12h-1zM693,362h1v12h-1zM694,362h1v12h-1zM695,363h1v11h-1zM696,364h1v10h-1zM697,364h1v10h-1zM698,364h1v10h-1zM699,365h1v9h-1zM700,365h1v9h-1zM701,365h1v9h-1zM702,365h1v9h-1zM703,365h1v9h-1z" fill="#238b45"/>
<rect x="170" y="392" width="1176" height="1" fill="#005a32" />
<path d="M641,379h1v13h-1zM642,379h1v13h-1zM643,379h1v13h-1zM644,378h1v14h-1zM645,378h1v14h-1zM646,378h1v14h-1zM647,378h1v14h-1zM648,378h1v14h-1zM649,378h1v14h-1zM650,377h1v15h-1zM651,377h1v15h-1zM652,377h1v15h-1zM653,377h1v15h-1zM654,378h1v14h-1zM655,378h1v14h-1zM656,378h1v14h-1zM657,378h1v14h-1zM658,378h1v14h-1zM659,378h1v14h-1zM660,378h1v14h-1zM661,378h1v14h-1zM662,378h1v14h-1zM663,378h1v14h-1zM664,378h1v14h-1zM665,378h1v14h-1zM666,378h1v14h-1zM667,378h1v14h-1zM668,378h1v14h-1zM669,378h1v14h-1zM670,378h1v14h-1zM671,378h1v14h-1zM672,378h1v14h-1zM673,380h1v12h-1zM674,381h1v11h-1zM675,381h1v11h-1zM676,381h1v11h-1zM677,381h1v11h-1zM678,381h1v11h-1zM679,381h1v11h-1zM680,381h1v11h-1zM681,381h1v11h-1zM682,381h1v11h-1zM683,381h1v11h-1zM684,382h1v10h-1zM685,383h1v9h-1zM686,383h1v9h-1zM687,383h1v9h-1zM688,384h1v8h-1zM689,384h1v8h-1zM690,384h1v8h-1zM691,384h1v8h-1zM692,384h1v8h-1zM693,384h1v8h-1zM694,383h1v9h-1zM695,382h1v10h-1zM696,382h1v10h-1zM697,382h1v10h-1zM698,382h1v10h-1zM699,382h1v10h-1zM700,382h1v10h-1zM701,382h1v10h-1zM702,382h1v10h-1zM703,382h1v10h-1zM714,391h34v1h-34zM857,391h5v1h-5zM888,391h39v1h-39z" fill="#005a32"/>
<rect x="170" y="410" width="1176" height="1" fill="#fcfbfd" />
<path d="M641,398h1v12h-1zM642,398h1v12h-1zM643,398h1v12h-1zM644,398h1v12h-1zM645,398h1v12h-1zM646,398h1v12h-1zM647,398h1v12h-1zM648,397h1v13h-1zM649,397h1v13h-1zM650,397h1v13h-1zM651,397h1v13h-1zM652,397h1v13h-1zM653,397h1v13h-1zM654,397h1v13h-1zM655,397h1v13h-1zM656,397h1v13h-1zM657,397h1v13h-1zM658,397h1v13h-1zM659,397h1v13h-1zM660,397h1v13h-1zM661,397h1v13h-1zM662,397h1v13h-1zM663,396h1v14h-1zM664,396h1v14h-1zM665,396h1v14h-1zM666,396h1v14h-1zM667,396h1v14h-1zM668,396h1v14h-1zM669,396h1v14h-1zM670,396h1v14h-1zM671,396h1v14h-1zM672,396h1v14h-1zM673,396h1v14h-1zM674,396h1v14h-1zM675,396h1v14h-1zM676,396h1v14h-1zM677,396h1v14h-1zM678,396h1v14h-1zM679,397h1v13h-1zM680,397h1v13h-1zM681,397h1v13h-1zM682,397h1v13h-1zM683,397h1v13h-1zM684,397h1v13h-1zM685,397h1v13h-1zM686,397h1v13h-1zM687,397h1v13h-1zM688,397h1v13h-1zM689,397h1v13h-1zM690,397h1v13h-1zM691,397h1v13h-1zM692,397h1v13h-1zM693,397h1v13h-1zM694,397h1v13h-1zM695,398h1v12h-1zM696,398h1v12h-1zM697,398h1v12h-1zM698,398h1v12h-1zM699,398h1v12h-1zM700,398h1v12h-1zM701,398h1v12h-1zM702,398h1v12h-1zM703,398h1v12h-1z" fill="#fcfbfd"/>
<rect x="170" y="428" width="1176" height="1" fill="#efedf5" />
<path d="M641,414h1v14h-1zM642,414h1v14h-1zM643,414h1v14h-1zM644,414h1v14h-1zM645,415h1v13h-1zM646,415h1v13h-1zM647,415h1v13h-1zM648,415h1v13h-1zM649,415h1v13h-1zM650,415h1v13h-1zM651,415h1v13h-1zM652,415h1v13h-1zM653,414h1v14h-1zM654,414h1v14h-1zM655,414h1v14h-1zM656,414h1v14h-1zM657,414h1v14h-1zM658,414h1v14h-1zM659,414h1v14h-1zM660,414h1v14h-1zM661,414h1v14h-1zM662,414h1v14h-1zM663,414h1v14h-1zM664,414h1v14h-1zM665,414h1v14h-1zM666,414h1v14h-1zM667,414h1v14h-1zM668,414h1v14h-1zM669,414h1v14h-1zM670,414h1v14h-1zM671,414h1v14h-1zM672,414h1v14h-1zM673,416h1v12h-1zM674,416h1v12h-1zM675,417h1v11h-1zM676,417h1v11h-1zM677,417h1v11h-1zM678,418h1v10h-1zM679,418h1v10h-1zM680,418h1v10h-1zM681,418h1v10h-1zM682,418h1v10h-1zM683,418h1v10h-1zM684,418h1v10h-1zM685,417h1v11h-1zM686,417h1v11h-1zM687,417h1v11h-1zM688,417h1v11h-1zM689,417h1v11h-1zM690,418h1v10h-1zM691,418h1v10h-1zM692,418h1v10h-1zM693,418h1v10h-1zM694,418h1v10h-1zM695,418h1v10h-1zM696,418h1v10h-1zM697,419h1v9h-1zM698,419h1v9h-1zM699,419h1v9h-1zM700,418h1v10h-1zM701,418h1v10h-1zM702,417h1v11h-1zM703,417h1v11h-1z" fill="#efedf5"/>
<rect x="170" y="446" width="1176" height="1" fill="#dadaeb" />
<path d="M641,432h1v14h-1zM642,432h1v14h-1zM643,433h1v13h-1zM644,433h1v13h-1zM645,433h1v13h-1zM646,434h1v12h-1zM647,434h1v12h-1zM648,434h1v12h-1zM649,434h1v12h-1zM650,434h1v12h-1zM651,434h1v12h-1zM652,434h1v12h-1zM653,434h1v12h-1zM654,434h1v12h-1zM655,434h1v12h-1zM656,434h1v12h-1zM657,434h1v12h-1zM658,434h1v12h-1zM659,434h1v12h-1zM660,434h1v12h-1zM661,434h1v12h-1zM662,435h1v11h-1zM663,435h1v11h-1zM664,435h1v11h-1zM665,435h1v11h-1zM666,435h1v11h-1zM667,435h1v11h-1zM668,435h1v11h-1zM669,436h1v10h-1zM670,436h1v10h-1zM671,436h1v10h-1zM672,436h1v10h-1zM673,436h1v10h-1zM674,437h1v9h-1zM675,437h1v9h-1zM676,438h1v8h-1zM677,438h1v8h-1zM678,439h1v7h-1zM679,439h1v7h-1zM680,439h1v7h-1zM681,440h1v6h-1zM682,440h1v6h-1zM683,440h1v6h-1zM684,440h1v6h-1zM685,440h1v6h-1zM686,440h1v6h-1zM687,440h1v6h-1zM688,440h1v6h-1zM689,440h1v6h-1zM690,440h1v6h-1zM691,439h1v7h-1zM692,439h1v7h-1zM693,439h1v7h-1zM694,439h1v7h-1zM695,439h1v7h-1zM696,438h1v8h-1zM697,438h1v8h-1zM698,438h1v8h-1zM699,437h1v9h-1zM700,437h1v9h-1zM701,437h1v9h-1zM702,437h1v9h-1zM703,437h1v9h-1z" fill="#dadaeb"/>
<rect x="170" y="464" width="1176" height="1" fill="#bcbddc" />
<path d="M641,449h1v15h-1zM642,450h1v14h-1zM643,451h1v13h-1zM644,451h1v13h-1zM645,451h1v13h-1zM646,451h1v13h-1zM647,452h1v12h-1zM648,452h1v12h-1zM649,452h1v12h-1zM650,452h1v12h-1zM651,452h1v12h-1zM652,451h1v13h-1zM653,451h1v13h-1zM654,451h1v13h-1zM655,450h1v14h-1zM656,450h1v14h-1zM657,450h1v14h-1zM658,450h1v14h-1zM659,450h1v14h-1zM660,451h1v13h-1zM661,451h1v13h-1zM662,451h1v13h-1zM663,451h1v13h-1zM664,451h1v13h-1zM665,451h1v13h-1zM666,451h1v13h-1zM667,451h1v13h-1zM668,452h1v12h-1zM669,452h1v12h-1zM670,452h1v12h-1zM671,452h1v12h-1zM672,452h1v12h-1zM673,452h1v12h-1zM674,453h1v11h-1zM675,453h1v11h-1zM676,453h1v11h-1zM677,454h1v10h-1zM678,454h1v10h-1zM679,455h1v9h-1zM680,456h1v8h-1zM681,456h1v8h-1zM682,455h1v9h-1zM683,455h1v9h-1zM684,455h1v9h-1zM685,454h1v10h-1zM686,454h1v10h-1zM687,454h1v10h-1zM688,454h1v10h-1zM689,454h1v10h-1zM690,454h1v10h-1zM691,454h1v10h-1zM692,454h1v10h-1zM693,454h1v10h-1zM694,454h1v10h-1zM695,455h1v9h-1zM696,455h1v9h-1zM697,455h1v9h-1zM698,455h1v9h-1zM699,455h1v9h-1zM700,455h1v9h-1zM701,455h1v9h-1zM702,455h1v9h-1zM703,455h1v9h-1z" fill="#bcbddc"/>
<rect x="170" y="482" width="1176" height="1" fill="#9e9ac8" />
<path d="M641,468h1v14h-1zM642,468h1v14h-1zM643,469h1v13h-1zM644,469h1v13h-1zM645,469h1v13h-1zM646,469h1v13h-1zM647,469h1v13h-1zM648,470h1v12h-1zM649,470h1v12h-1zM650,470h1v12h-1zM651,470h1v12h-1zM652,470h1v12h-1zM653,470h1v12h-1zM654,469h1v13h-1zM655,469h1v13h-1zM656,469h1v13h-1zM657,468h1v14h-1zM658,468h1v14h-1zM659,468h1v14h-1zM660,468h1v14h-1zM661,468h1v14h-1zM662,468h1v14h-1zM663,468h1v14h-1zM664,468h1v14h-1zM665,468h1v14h-1zM666,468h1v14h-1zM667,468h1v14h-1zM668,468h1v14h-1zM669,468h1v14h-1zM670,468h1v14h-1zM671,468h1v14h-1zM672,468h1v14h-1zM673,469h1v13h-1zM674,469h1v13h-1zM675,469h1v13h-1zM676,470h1v12h-1zM677,470h1v12h-1zM678,471h1v11h-1zM679,471h1v11h-1zM680,472h1v10h-1zM681,473h1v9h-1zM682,473h1v9h-1zM683,473h1v9h-1zM684,472h1v10h-1zM685,472h1v10h-1zM686,472h1v10h-1zM687,472h1v10h-1zM688,472h1v10h-1zM689,472h1v10h-1zM690,472h1v10h-1zM691,472h1v10h-1zM692,472h1v10h-1zM693,472h1v10h-1zM694,472h1v10h-1zM695,472h1v10h-1zM696,472h1v10h-1zM697,473h1v9h-1zM698,473h1v9h-1zM699,473h1v9h-1zM700,473h1v9h-1zM701,473h1v9h-1zM702,473h1v9h-1zM703,473h1v9h-1z" fill="#9e9ac8"/>
<rect x="170" y="500" width="1176" height="1" fill="#807dba" />
<path d="M641,485h1v15h-1zM642,486h1v14h-1zM643,486h1v14h-1zM644,486h1v14h-1zM645,487h1v13h-1zM646,487h1v13h-1zM647,487h1v13h-1zM648,487h1v13h-1zM649,487h1v13h-1zM650,487h1v13h-1zM651,487h1v13h-1zM652,487h1v13h-1zM653,488h1v12h-1zM654,488h1v12h-1zM655,488h1v12h-1zM656,488h1v12h-1zM657,488h1v12h-1zM658,488h1v12h-1zM659,487h1v13h-1zM660,486h1v14h-1zM661,486h1v14h-1zM662,486h1v14h-1zM663,486h1v14h-1zM664,486h1v14h-1zM665,486h1v14h-1zM666,486h1v14h-1zM667,486h1v14h-1zM668,486h1v14h-1zM669,486h1v14h-1zM670,486h1v14h-1zM671,486h1v14h-1zM672,487h1v13h-1zM673,488h1v12h-1zM674,489h1v11h-1zM675,489h1v11h-1zM676,490h1v10h-1zM677,490h1v10h-1zM678,490h1v10h-1zM679,490h1v10h-1zM680,490h1v10h-1zM681,490h1v10h-1zM682,490h1v10h-1zM683,490h1v10h-1zM684,491h1v9h-1zM685,491h1v9h-1zM686,491h1v9h-1zM687,491h1v9h-1zM688,491h1v9h-1zM689,491h1v9h-1zM690,491h1v9h-1zM691,491h1v9h-1zM692,491h1v9h-1zM693,491h1v9h-1zM694,491h1v9h-1zM695,491h1v9h-1zM696,491h1v9h-1zM697,492h1v8h-1zM698,492h1v8h-1zM699,492h1v8h-1zM700,492h1v8h-1zM701,492h1v8h-1zM702,492h1v8h-1zM703,492h1v8h-1zM810,499h11v1h-11z" fill="#807dba"/>
<rect x="170" y="518" width="1176" height="1" fill="#6a51a3" />
<path d="M641,504h1v14h-1zM642,504h1v14h-1zM643,505h1v13h-1zM644,505h1v13h-1zM645,505h1v13h-1zM646,505h1v13h-1zM647,506h1v12h-1zM648,506h1v12h-1zM649,506h1v12h-1zM650,506h1v12h-1zM651,506h1v12h-1zM652,506h1v12h-1zM653,505h1v13h-1zM654,505h1v13h-1zM655,505h1v13h-1zM656,504h1v14h-1zM657,504h1v14h-1zM658,504h1v14h-1zM659,504h1v14h-1zM660,504h1v14h-1zM661,504h1v14h-1zM662,504h1v14h-1zM663,504h1v14h-1zM664,504h1v14h-1zM665,504h1v14h-1zM666,504h1v14h-1zM667,504h1v14h-1zM668,504h1v14h-1zM669,504h1v14h-1zM670,504h1v14h-1zM671,504h1v14h-1zM672,504h1v14h-1zM673,504h1v14h-1zM674,504h1v14h-1zM675,506h1v12h-1zM676,506h1v12h-1zM677,505h1v13h-1zM678,505h1v13h-1zM679,506h1v12h-1zM680,506h1v12h-1zM681,506h1v12h-1zM682,506h1v12h-1zM683,507h1v11h-1zM684,507h1v11h-1zM685,506h1v12h-1zM686,506h1v12h-1zM687,506h1v12h-1zM688,506h1v12h-1zM689,506h1v12h-1zM690,506h1v12h-1zM691,506h1v12h-1zM692,506h1v12h-1zM693,506h1v12h-1zM694,506h1v12h-1zM695,506h1v12h-1zM696,507h1v11h-1zM697,507h1v11h-1zM698,508h1v10h-1zM699,508h1v10h-1zM700,508h1v10h-1zM701,509h1v9h-1zM702,509h1v9h-1zM703,509h1v9h-1zM779,517h26v1h-26zM810,510h2v8h-2zM812,511h7v7h-7zM819,512h2v6h-2z" fill="#6a51a3"/>
<rect x="170" y="536" width="1176" height="1" fill="#4a1486" />
<path d="M641,521h1v15h-1zM642,522h1v14h-1zM643,522h1v14h-1zM644,522h1v14h-1zM645,521h1v15h-1zM646,521h1v15h-1zM647,522h1v14h-1zM648,522h1v14h-1zM649,522h1v14h-1zM650,523h1v13h-1zM651,523h1v13h-1zM652,524h1v12h-1zM653,524h1v12h-1zM654,525h1v11h-1zM655,525h1v11h-1zM656,525h1v11h-1zM657,525h1v11h-1zM658,524h1v12h-1zM659,524h1v12h-1zM660,524h1v12h-1zM661,523h1v13h-1zM662,523h1v13h-1zM663,523h1v13h-1zM664,523h1v13h-1zM665,523h1v13h-1zM666,523h1v13h-1zM667,523h1v13h-1zM668,523h1v13h-1zM669,523h1v13h-1zM670,523h1v13h-1zM671,524h1v12h-1zM672,524h1v12h-1zM673,524h1v12h-1zM674,525h1v11h-1zM675,526h1v10h-1zM676,526h1v10h-1zM677,526h1v10h-1zM678,526h1v10h-1zM679,526h1v10h-1zM680,526h1v10h-1zM681,526h1v10h-1zM682,526h1v10h-1zM683,526h1v10h-1zM684,526h1v10h-1zM685,526h1v10h-1zM686,526h1v10h-1zM687,526h1v10h-1zM688,526h1v10h-1zM689,526h1v10h-1zM690,526h1v10h-1zM691,526h1v10h-1zM692,527h1v9h-1zM693,527h1v9h-1zM694,527h1v9h-1zM695,527h1v9h-1zM696,527h1v9h-1zM697,527h1v9h-1zM698,527h1v9h-1zM699,527h1v9h-1zM700,527h1v9h-1zM701,527h1v9h-1zM702,527h1v9h-1zM703,527h1v9h-1zM810,528h2v8h-2zM812,529h7v7h-7zM819,530h2v6h-2z" fill="#4a1486"/>
<rect x="170" y="554" width="1176" height="1" fill="#f7fbff" />
<path d="M641,541h1v13h-1zM642,541h1v13h-1zM643,541h1v13h-1zM644,541h1v13h-1zM645,541h1v13h-1zM646,541h1v13h-1zM647,541h1v13h-1zM648,541h1v13h-1zM649,541h1v13h-1zM650,541h1v13h-1zM651,541h1v13h-1zM652,541h1v13h-1zM653,541h1v13h-1zM654,541h1v13h-1zM655,540h1v14h-1zM656,540h1v14h-1zM657,540h1v14h-1zM658,540h1v14h-1zM659,540h1v14h-1zM660,540h1v14h-1zM661,540h1v14h-1zM662,540h1v14h-1zM663,540h1v14h-1zM664,540h1v14h-1zM665,540h1v14h-1zM666,540h1v14h-1zM667,540h1v14h-1zM668,540h1v14h-1zM669,540h1v14h-1zM670,540h1v14h-1zM671,540h1v14h-1zM672,540h1v14h-1zM673,540h1v14h-1zM674,541h1v13h-1zM675,541h1v13h-1zM676,541h1v13h-1zM677,541h1v13h-1zM678,541h1v13h-1zM679,541h1v13h-1zM680,541h1v13h-1zM681,541h1v13h-1zM682,541h1v13h-1zM683,542h1v12h-1zM684,542h1v12h-1zM685,542h1v12h-1zM686,542h1v12h-1zM687,542h1v12h-1zM688,542h1v12h-1zM689,542h1v12h-1zM690,542h1v12h-1zM691,543h1v11h-1zM692,543h1v11h-1zM693,543h1v11h-1zM694,543h1v11h-1zM695,543h1v11h-1zM696,543h1v11h-1zM697,543h1v11h-1zM698,543h1v11h-1zM699,543h1v11h-1zM700,544h1v10h-1zM701,544h1v10h-1zM702,544h1v10h-1zM703,544h1v10h-1z" fill="#f7fbff"/>
<rect x="170" y="572" width="1176" height="1" fill="#deebf7" />
<path d="M641,558h1v14h-1zM642,558h1v14h-1zM643,559h1v13h-1zM644,559h1v13h-1zM645,559h1v13h-1zM646,559h1v13h-1zM647,559h1v13h-1zM648,559h1v13h-1zM649,559h1v13h-1zM650,559h1v13h-1zM651,559h1v13h-1zM652,559h1v13h-1zM653,559h1v13h-1zM654,559h1v13h-1zM655,558h1v14h-1zM656,558h1v14h-1zM657,558h1v14h-1zM658,558h1v14h-1zM659,558h1v14h-1zM660,558h1v14h-1zM661,558h1v14h-1zM662,558h1v14h-1zM663,559h1v13h-1zM664,559h1v13h-1zM665,559h1v13h-1zM666,559h1v13h-1zM667,560h1v12h-1zM668,560h1v12h-1zM669,560h1v12h-1zM670,560h1v12h-1zM671,561h1v11h-1zM672,561h1v11h-1zM673,561h1v11h-1zM674,561h1v11h-1zM675,561h1v11h-1zM676,562h1v10h-1zM677,562h1v10h-1zM678,562h1v10h-1zM679,562h1v10h-1zM680,562h1v10h-1zM681,563h1v9h-1zM682,563h1v9h-1zM683,563h1v9h-1zM684,562h1v10h-1zM685,562h1v10h-1zM686,562h1v10h-1zM687,562h1v10h-1zM688,563h1v9h-1zM689,563h1v9h-1zM690,563h1v9h-1zM691,563h1v9h-1zM692,562h1v10h-1zM693,562h1v10h-1zM694,562h1v10h-1zM695,562h1v10h-1zM696,562h1v10h-1zM697,563h1v9h-1zM698,563h1v9h-1zM699,563h1v9h-1zM700,563h1v9h-1zM701,563h1v9h-1zM702,563h1v9h-1zM703,563h1v9h-1z" fill="#deebf7"/>
<rect x="170" y="590" width="1176" height="1" fill="#c6dbef" />
<path d="M641,576h1v14h-1zM642,576h1v14h-1zM643,576h1v14h-1zM644,576h1v14h-1zM645,577h1v13h-1zM646,577h1v13h-1zM647,578h1v12h-1zM648,579h1v11h-1zM649,579h1v11h-1zM650,579h1v11h-1zM651,579h1v11h-1zM652,579h1v11h-1zM653,579h1v11h-1zM654,579h1v11h-1zM655,578h1v12h-1zM656,578h1v12h-1zM657,578h1v12h-1zM658,578h1v12h-1zM659,578h1v12h-1zM660,578h1v12h-1zM661,577h1v13h-1zM662,577h1v13h-1zM663,576h1v14h-1zM664,576h1v14h-1zM665,577h1v13h-1zM666,577h1v13h-1zM667,577h1v13h-1zM668,577h1v13h-1zM669,577h1v13h-1zM670,577h1v13h-1zM671,577h1v13h-1zM672,577h1v13h-1zM673,578h1v12h-1zM674,578h1v12h-1zM675,579h1v11h-1zM676,579h1v11h-1zM677,579h1v11h-1zM678,579h1v11h-1zM679,579h1v11h-1zM680,579h1v11h-1zM681,580h1v10h-1zM682,580h1v10h-1zM683,580h1v10h-1zM684,580h1v10h-1zM685,579h1v11h-1zM686,579h1v11h-1zM687,579h1v11h-1zM688,579h1v11h-1zM689,579h1v11h-1zM690,580h1v10h-1zM691,580h1v10h-1zM692,580h1v10h-1zM693,580h1v10h-1zM694,580h1v10h-1zM695,580h1v10h-1zM696,580h1v10h-1zM697,580h1v10h-1zM698,580h1v10h-1zM699,580h1v10h-1zM700,580h1v10h-1zM701,580h1v10h-1zM702,580h1v10h-1zM703,580h1v10h-1z" fill="#c6dbef"/>
<rect x="170" y="608" width="1176" height="1" fill="#9ecae1" />
<path d="M641,594h1v14h-1zM642,594h1v14h-1zM643,594h1v14h-1zM644,594h1v14h-1zM645,595h1v13h-1zM646,595h1v13h-1zM647,595h1v13h-1zM648,596h1v12h-1zM649,596h1v12h-1zM650,596h1v12h-1zM651,596h1v12h-1zM652,596h1v12h-1zM653,596h1v12h-1zM654,595h1v13h-1zM655,595h1v13h-1zM656,595h1v13h-1zM657,595h1v13h-1zM658,595h1v13h-1zM659,595h1v13h-1zM660,595h1v13h-1zM661,594h1v14h-1zM662,594h1v14h-1zM663,594h1v14h-1zM664,594h1v14h-1zM665,594h1v14h-1zM666,594h1v14h-1zM667,594h1v14h-1zM668,595h1v13h-1zM669,595h1v13h-1zM670,595h1v13h-1zM671,595h1v13h-1zM672,596h1v12h-1zM673,596h1v12h-1zM674,596h1v12h-1zM675,596h1v12h-1zM676,597h1v11h-1zM677,598h1v10h-1zM678,598h1v10h-1zM679,599h1v9h-1zM680,599h1v9h-1zM681,599h1v9h-1zM682,599h1v9h-1zM683,599h1v9h-1zM684,599h1v9h-1zM685,598h1v10h-1zM686,598h1v10h-1zM687,598h1v10h-1zM688,598h1v10h-1zM689,598h1v10h-1zM690,598h1v10h-1zM691,599h1v9h-1zM692,599h1v9h-1zM693,599h1v9h-1zM694,599h1v9h-1zM695,600h1v8h-1zM696,600h1v8h-1zM697,600h1v8h-1zM698,600h1v8h-1zM699,600h1v8h-1zM700,600h1v8h-1zM701,600h1v8h-1zM702,600h1v8h-1zM703,600h1v8h-1z" fill="#9ecae1"/>
<rect x="170" y="626" width="1176" height="1" fill="#6baed6" />
<path d="M641,612h1v14h-1zM642,612h1v14h-1zM643,612h1v14h-1zM644,612h1v14h-1zM645,612h1v14h-1zM646,612h1v14h-1zM647,613h1v13h-1zM648,613h1v13h-1zM649,613h1v13h-1zM650,613h1v13h-1zM651,613h1v13h-1zM652,613h1v13h-1zM653,613h1v13h-1zM654,613h1v13h-1zM655,613h1v13h-1zM656,613h1v13h-1zM657,613h1v13h-1zM658,613h1v13h-1zM659,613h1v13h-1zM660,612h1v14h-1zM661,612h1v14h-1zM662,612h1v14h-1zM663,612h1v14h-1zM664,612h1v14h-1zM665,612h1v14h-1zM666,612h1v14h-1zM667,612h1v14h-1zM668,612h1v14h-1zM669,612h1v14h-1zM670,612h1v14h-1zM671,612h1v14h-1zM672,612h1v14h-1zM673,613h1v13h-1zM674,614h1v12h-1zM675,614h1v12h-1zM676,614h1v12h-1zM677,614h1v12h-1zM678,615h1v11h-1zM679,615h1v11h-1zM680,615h1v11h-1zM681,616h1v10h-1zM682,617h1v9h-1zM683,617h1v9h-1zM684,617h1v9h-1zM685,617h1v9h-1zM686,617h1v9h-1zM687,617h1v9h-1zM688,617h1v9h-1zM689,617h1v9h-1zM690,617h1v9h-1zM691,617h1v9h-1zM692,617h1v9h-1zM693,617h1v9h-1zM694,617h1v9h-1zM695,617h1v9h-1zM696,617h1v9h-1zM697,617h1v9h-1zM698,617h1v9h-1zM699,617h1v9h-1zM700,618h1v8h-1zM701,618h1v8h-1zM702,618h1v8h-1zM703,618h1v8h-1z" fill="#6baed6"/>
<rect x="170" y="644" width="1176" height="1" fill="#4292c6" />
<path d="M641,630h1v14h-1zM642,630h1v14h-1zM643,630h1v14h-1zM644,631h1v13h-1zM645,631h1v13h-1zM646,631h1v13h-1zM647,632h1v12h-1zM648,632h1v12h-1zM649,632h1v12h-1zM650,632h1v12h-1zM651,632h1v12h-1zM652,632h1v12h-1zM653,632h1v12h-1zM654,632h1v12h-1zM655,632h1v12h-1zM656,632h1v12h-1zM657,632h1v12h-1zM658,632h1v12h-1zM659,632h1v12h-1zM660,632h1v12h-1zM661,632h1v12h-1zM662,631h1v13h-1zM663,631h1v13h-1zM664,631h1v13h-1zM665,630h1v14h-1zM666,630h1v14h-1zM667,630h1v14h-1zM668,630h1v14h-1zM669,630h1v14h-1zM670,631h1v13h-1zM671,631h1v13h-1zM672,632h1v12h-1zM673,632h1v12h-1zM674,631h1v13h-1zM675,631h1v13h-1zM676,631h1v13h-1zM677,632h1v12h-1zM678,632h1v12h-1zM679,632h1v12h-1zM680,632h1v12h-1zM681,632h1v12h-1zM682,632h1v12h-1zM683,632h1v12h-1zM684,632h1v12h-1zM685,632h1v12h-1zM686,632h1v12h-1zM687,632h1v12h-1zM688,632h1v12h-1zM689,632h1v12h-1zM690,632h1v12h-1zM691,632h1v12h-1zM692,632h1v12h-1zM693,632h1v12h-1zM694,632h1v12h-1zM695,631h1v13h-1zM696,631h1v13h-1zM697,631h1v13h-1zM698,631h1v13h-1zM699,631h1v13h-1zM700,631h1v13h-1zM701,631h1v13h-1zM702,631h1v13h-1zM703,631h1v13h-1zM810,642h7v2h-7zM817,643h3v1h-3z" fill="#4292c6"/>
<rect x="170" y="662" width="1176" height="1" fill="#2171b5" />
<path d="M641,648h1v14h-1zM642,648h1v14h-1zM643,649h1v13h-1zM644,649h1v13h-1zM645,649h1v13h-1zM646,649h1v13h-1zM647,649h1v13h-1zM648,650h1v12h-1zM649,650h1v12h-1zM650,650h1v12h-1zM651,650h1v12h-1zM652,649h1v13h-1zM653,649h1v13h-1zM654,649h1v13h-1zM655,648h1v14h-1zM656,648h1v14h-1zM657,648h1v14h-1zM658,647h1v15h-1zM659,647h1v15h-1zM660,647h1v15h-1zM661,647h1v15h-1zM662,647h1v15h-1zM663,647h1v15h-1zM664,647h1v15h-1zM665,648h1v14h-1zM666,648h1v14h-1zM667,648h1v14h-1zM668,648h1v14h-1zM669,648h1v14h-1zM670,648h1v14h-1zM671,648h1v14h-1zM672,648h1v14h-1zM673,649h1v13h-1zM674,649h1v13h-1zM675,649h1v13h-1zM676,649h1v13h-1zM677,650h1v12h-1zM678,650h1v12h-1zM679,650h1v12h-1zM680,650h1v12h-1zM681,651h1v11h-1zM682,651h1v11h-1zM683,651h1v11h-1zM684,651h1v11h-1zM685,651h1v11h-1zM686,651h1v11h-1zM687,651h1v11h-1zM688,651h1v11h-1zM689,651h1v11h-1zM690,651h1v11h-1zM691,651h1v11h-1zM692,651h1v11h-1zM693,651h1v11h-1zM694,652h1v10h-1zM695,652h1v10h-1zM696,652h1v10h-1zM697,652h1v10h-1zM698,652h1v10h-1zM699,652h1v10h-1zM700,652h1v10h-1zM701,652h1v10h-1zM702,652h1v10h-1zM703,652h1v10h-1zM810,655h2v7h-2zM812,656h4v6h-4zM816,657h3v5h-3zM819,658h2v4h-2z" fill="#2171b5"/>
<rect x="170" y="680" width="1176" height="1" fill="#084594" />
<path d="M641,666h1v14h-1zM642,666h1v14h-1zM643,666h1v14h-1zM644,666h1v14h-1zM645,666h1v14h-1zM646,666h1v14h-1zM647,667h1v13h-1zM648,667h1v13h-1zM649,667h1v13h-1zM650,667h1v13h-1zM651,668h1v12h-1zM652,668h1v12h-1zM653,669h1v11h-1zM654,670h1v10h-1zM655,670h1v10h-1zM656,669h1v11h-1zM657,668h1v12h-1zM658,668h1v12h-1zM659,667h1v13h-1zM660,667h1v13h-1zM661,667h1v13h-1zM662,667h1v13h-1zM663,667h1v13h-1zM664,666h1v14h-1zM665,666h1v14h-1zM666,666h1v14h-1zM667,666h1v14h-1zM668,666h1v14h-1zM669,666h1v14h-1zM670,667h1v13h-1zM671,667h1v13h-1zM672,667h1v13h-1zM673,668h1v12h-1zM674,668h1v12h-1zM675,669h1v11h-1zM676,669h1v11h-1zM677,669h1v11h-1zM678,669h1v11h-1zM679,669h1v11h-1zM680,669h1v11h-1zM681,669h1v11h-1zM682,669h1v11h-1zM683,669h1v11h-1zM684,669h1v11h-1zM685,669h1v11h-1zM686,669h1v11h-1zM687,669h1v11h-1zM688,669h1v11h-1zM689,669h1v11h-1zM690,669h1v11h-1zM691,669h1v11h-1zM692,669h1v11h-1zM693,669h1v11h-1zM694,669h1v11h-1zM695,669h1v11h-1zM696,669h1v11h-1zM697,670h1v10h-1zM698,670h1v10h-1zM699,670h1v10h-1zM700,670h1v10h-1zM701,670h1v10h-1zM702,670h1v10h-1zM703,670h1v10h-1zM810,673h4v7h-4zM814,674h3v6h-3zM817,675h2v5h-2zM819,676h2v4h-2z" fill="#084594"/>
</g>
<g clip-path="url(#nameclip)">
<text transform="translate(3.2,260.7) scale(1.12,1)" font-size="9.3" font-weight="400" fill="#111" text-anchor="start" stroke="#111" stroke-width="0.15" >Branaplam_1_LCL_polyA_u  (1) .</text>
<text transform="translate(3.2,278.7) scale(1.12,1)" font-size="9.3" font-weight="400" fill="#111" text-anchor="start" stroke="#111" stroke-width="0.15" >Branaplam_3.16...polyA_u  (1) .</text>
<text transform="translate(3.2,296.7) scale(1.12,1)" font-size="9.3" font-weight="400" fill="#111" text-anchor="start" stroke="#111" stroke-width="0.15" >Branaplam_10_LCL_polyA_u  (1)</text>
<text transform="translate(3.2,314.7) scale(1.12,1)" font-size="9.3" font-weight="400" fill="#111" text-anchor="start" stroke="#111" stroke-width="0.15" >Branaplam_31.6...polyA_u  (1) .</text>
<text transform="translate(3.2,332.7) scale(1.12,1)" font-size="9.3" font-weight="400" fill="#111" text-anchor="start" stroke="#111" stroke-width="0.15" >Branaplam_100...olyA_u  (1) .</text>
<text transform="translate(3.2,350.7) scale(1.12,1)" font-size="9.3" font-weight="400" fill="#111" text-anchor="start" stroke="#111" stroke-width="0.15" >Branaplam_316...olyA_u  (1) .</text>
<text transform="translate(3.2,368.7) scale(1.12,1)" font-size="9.3" font-weight="400" fill="#111" text-anchor="start" stroke="#111" stroke-width="0.15" >Branaplam_100...olyA_u  (1) .</text>
<text transform="translate(3.2,386.7) scale(1.12,1)" font-size="9.3" font-weight="400" fill="#111" text-anchor="start" stroke="#111" stroke-width="0.15" >Branaplam_316...olyA_u  (1) .</text>
<text transform="translate(3.2,404.7) scale(1.12,1)" font-size="9.3" font-weight="400" fill="#111" text-anchor="start" stroke="#111" stroke-width="0.15" >C2C5_0.316_LCL_polyA_u  (1) .</text>
<text transform="translate(3.2,422.7) scale(1.12,1)" font-size="9.3" font-weight="400" fill="#111" text-anchor="start" stroke="#111" stroke-width="0.15" >C2C5_1_LCL_polyA_u  (1) .</text>
<text transform="translate(3.2,440.7) scale(1.12,1)" font-size="9.3" font-weight="400" fill="#111" text-anchor="start" stroke="#111" stroke-width="0.15" >C2C5_3.16_LCL_polyA_u  (1) .</text>
<text transform="translate(3.2,458.7) scale(1.12,1)" font-size="9.3" font-weight="400" fill="#111" text-anchor="start" stroke="#111" stroke-width="0.15" >C2C5_10_LCL_polyA_u  (1) .</text>
<text transform="translate(3.2,476.7) scale(1.12,1)" font-size="9.3" font-weight="400" fill="#111" text-anchor="start" stroke="#111" stroke-width="0.15" >C2C5_31.6_LCL_polyA_u  (1) .</text>
<text transform="translate(3.2,494.7) scale(1.12,1)" font-size="9.3" font-weight="400" fill="#111" text-anchor="start" stroke="#111" stroke-width="0.15" >C2C5_100_LCL_polyA_u  (1) .</text>
<text transform="translate(3.2,512.7) scale(1.12,1)" font-size="9.3" font-weight="400" fill="#111" text-anchor="start" stroke="#111" stroke-width="0.15" >C2C5_316_LCL_polyA_u  (1) .</text>
<text transform="translate(3.2,530.7) scale(1.12,1)" font-size="9.3" font-weight="400" fill="#111" text-anchor="start" stroke="#111" stroke-width="0.15" >C2C5_1000_LCL_polyA_u  (1) .</text>
<text transform="translate(3.2,548.7) scale(1.12,1)" font-size="9.3" font-weight="400" fill="#111" text-anchor="start" stroke="#111" stroke-width="0.15" >Risdiplam_3.16_LCL_polyA_u  (1</text>
<text transform="translate(3.2,566.7) scale(1.12,1)" font-size="9.3" font-weight="400" fill="#111" text-anchor="start" stroke="#111" stroke-width="0.15" >Risdiplam_10_LCL_polyA_u  (1) .</text>
<text transform="translate(3.2,584.7) scale(1.12,1)" font-size="9.3" font-weight="400" fill="#111" text-anchor="start" stroke="#111" stroke-width="0.15" >Risdiplam_31.6_LCL_polyA_u  (1</text>
<text transform="translate(3.2,602.7) scale(1.12,1)" font-size="9.3" font-weight="400" fill="#111" text-anchor="start" stroke="#111" stroke-width="0.15" >Risdiplam_100_...polyA_u  (1) .</text>
<text transform="translate(3.2,620.7) scale(1.12,1)" font-size="9.3" font-weight="400" fill="#111" text-anchor="start" stroke="#111" stroke-width="0.15" >Risdiplam_316_...polyA_u  (1) .</text>
<text transform="translate(3.2,638.7) scale(1.12,1)" font-size="9.3" font-weight="400" fill="#111" text-anchor="start" stroke="#111" stroke-width="0.15" >Risdiplam_1000...polyA_u  (1) .</text>
<text transform="translate(3.2,656.7) scale(1.12,1)" font-size="9.3" font-weight="400" fill="#111" text-anchor="start" stroke="#111" stroke-width="0.15" >Risdiplam_3160...polyA_u  (1) .</text>
<text transform="translate(3.2,674.7) scale(1.12,1)" font-size="9.3" font-weight="400" fill="#111" text-anchor="start" stroke="#111" stroke-width="0.15" >Risdiplam_1000...polyA_u  (1) .</text>
</g>
<rect x="0" y="680" width="1349" height="1" fill="#b8b8b8" />
<rect x="0" y="681" width="1349" height="1" fill="#646464" />
<rect x="0" y="682" width="1349" height="3" fill="#fafafa" />
<rect x="0" y="685" width="1349" height="1" fill="#666666" />
<rect x="0" y="686" width="1349" height="1" fill="#cccccc" />
</svg></body></html>
